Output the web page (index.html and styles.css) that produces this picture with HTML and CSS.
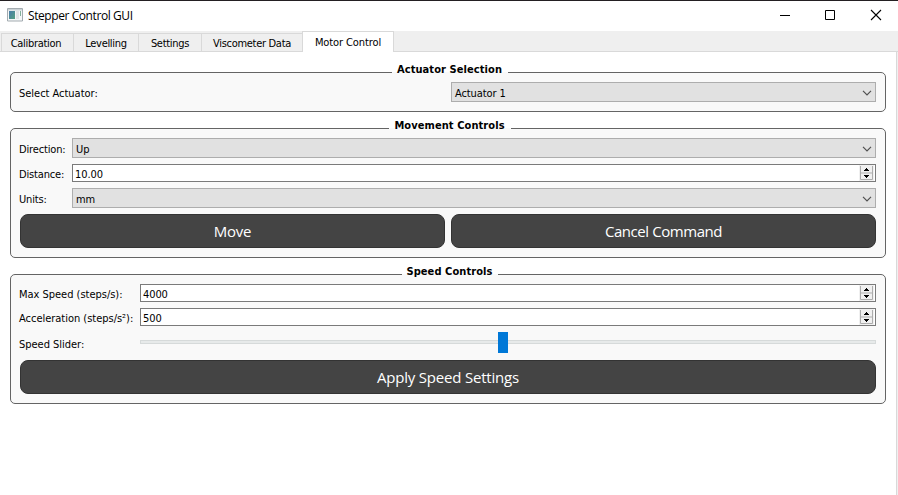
FILE: index.html
```html
<!DOCTYPE html>
<html lang="en">
<head>
<meta charset="utf-8">
<title>Stepper Control GUI</title>
<link rel="stylesheet" href="styles.css">
</head>
<body>
<svg class="defs" aria-hidden="true">
  <symbol id="chevron" viewBox="0 0 10 6"><path d="M1 .8 5 4.8 9 .8" fill="none" stroke="#505050" stroke-width="1.2"/></symbol>
  <symbol id="spin" viewBox="0 0 15 16">
    <path d="M0 0h15v16H0z" fill="#f0f0f0"/>
    <path d="M1.5 1v13.500h12V1M1.500 8h12" fill="none" stroke="#adadad"/>
    <path d="M7 3h1v1h1v1h1v1H5V5h1V4h1zM5 10h5v1H9v1H8v1H7v-1H6v-1H5z" fill="#000"/>
  </symbol>
</svg>
<header class="titlebar">
  <svg class="app-icon" width="16" height="14" viewBox="0 0 16 14">
    <defs><linearGradient id="pane" x2="1" y2="1"><stop stop-color="#4a7dab"/><stop offset="1" stop-color="#55a080"/></linearGradient></defs>
    <path d="M.5.5h15v12.500H.5z" fill="#f5f7f8" stroke="#a3abb0"/>
    <path d="M1 1h14v1.500H1z" fill="#cbd2d6"/>
    <path d="M2 3h6v8H2z" fill="url(#pane)"/>
    <path d="M9 3h3v8H9z" fill="#e1e4e6"/><path d="M13 3h1v5h-1z" fill="#82b19b"/>
  </svg>
  <h1>Stepper Control GUI</h1>
  <svg class="window-buttons" width="102" height="12" viewBox="0 0 102 12">
    <path d="M1 5.500h10M46.500 .5h9v9h-9z" fill="none" stroke="#000"/>
    <path d="M92 0l10 10M102 0 92 10" fill="none" stroke="#000" stroke-width="1.100"/>
  </svg>
</header>
<nav class="tabs">
  <a class="tab calibration">Calibration</a>
  <a class="tab levelling">Levelling</a>
  <a class="tab settings">Settings</a>
  <a class="tab viscometer">Viscometer Data</a>
  <a class="tab motor active">Motor Control</a>
</nav>
<main class="pane">
  <section class="group actuator">
    <h2><span>Actuator Selection</span></h2>
    <div class="row halves"><label>Select Actuator:</label><div class="combo">Actuator 1<svg><use href="#chevron"/></svg></div></div>
  </section>
  <section class="group movement">
    <h2><span>Movement Controls</span></h2>
    <div class="row"><label>Direction:</label><div class="combo">Up<svg><use href="#chevron"/></svg></div></div>
    <div class="row"><label>Distance:</label><div class="spinbox">10.00<svg><use href="#spin"/></svg></div></div>
    <div class="row"><label>Units:</label><div class="combo">mm<svg><use href="#chevron"/></svg></div></div>
    <div class="buttons"><button>Move</button><button class="cancel">Cancel Command</button></div>
  </section>
  <section class="group speed">
    <h2><span>Speed Controls</span></h2>
    <div class="row"><label>Max Speed (steps/s):</label><div class="spinbox">4000<svg><use href="#spin"/></svg></div></div>
    <div class="row"><label>Acceleration (steps/s²):</label><div class="spinbox">500<svg><use href="#spin"/></svg></div></div>
    <div class="row slider-row"><label>Speed Slider:</label><div class="slider"><i></i></div></div>
    <div class="buttons"><button>Apply Speed Settings</button></div>
  </section>
</main>
</body>
</html>
```
FILE: styles.css
```css
* { box-sizing: border-box; }
body {
  margin: 0;
  width: 898px;
  height: 495px;
  overflow: hidden;
  display: flex;
  flex-direction: column;
  background: #f0f0f0;
  color: #000;
  font: 11px/14px "DejaVu Sans Condensed", "DejaVu Sans", sans-serif;
  font-stretch: condensed;
  letter-spacing: -0.3px;
  white-space: nowrap;
}
.defs { position: absolute; width: 0; height: 0; }

.titlebar {
  height: 31px;
  flex: none;
  display: flex;
  align-items: center;
  background: #fff;
  border-top: 1px solid #231f22;
  padding: 0 16px 0 7px;
}
.app-icon { margin-top: -2px; }
.titlebar h1 { margin: 0 auto 0 5px; font: 12px/16px "Open Sans", sans-serif; letter-spacing: -0.42px; }
.window-buttons { margin-right: 1px; overflow: visible; }

.tabs {
  height: 21px;
  flex: none;
  display: flex;
  align-items: flex-end;
  padding-left: 1px;
  background: #efefef;
  box-shadow: inset 0 -1px #d9d9d9;
}
.tab {
  height: 19px;
  border: solid #d9d9d9;
  border-width: 1px 0 1px 1px;
  padding-top: 3px;
  text-align: center;
}
.tab.calibration { width: 72px; padding-right: 3px; }
.tab.levelling { width: 65px; }
.tab.settings { width: 63px; }
.tab.viscometer { width: 101px; }
.tab.active {
  width: 92px;
  height: 21px;
  padding-top: 4px;
  background: #fff;
  border-width: 1px 1px 0;
  letter-spacing: -0.1px;
}

.pane {
  width: 897px;
  flex: 1;
  background: #fff;
  border-right: 1px solid #d9d9d9;
  padding: 20px 10px 0;
  display: flex;
  flex-direction: column;
  gap: 16px;
}
.group {
  border: 1px solid #646464;
  border-radius: 5px;
  background: #f9f9f9;
  padding: 0 9px 9px;
  display: flex;
  flex-direction: column;
  gap: 6px;
}
.group h2 {
  height: 9px;
  margin: 0 -4px -6px 0;
  display: flex;
  justify-content: center;
  font-size: 11px;
  line-height: 14px;
  letter-spacing: 0.08px;
}
.group h2 span {
  height: 11px;
  margin-top: -10px;
  padding-right: 1px;
  text-align: center;
  background: linear-gradient(#fff 9px, #f9f9f9 9px);
}
.actuator h2 span { width: 116px; }
.movement h2 span { width: 122px; }
.speed h2 span { width: 96px; }

.row { display: grid; grid-template-columns: 46px 1fr; column-gap: 6px; align-items: center; }
.row.halves { grid-template-columns: 1fr 1fr; }
.speed .row { grid-template-columns: 114px 1fr; }
.row label { padding: 3px 0 0; margin: -1px 0 -2px -1px; letter-spacing: -0.16px; }
.speed .row label, .halves label { letter-spacing: -0.02px; }

.combo, .spinbox {
  display: flex;
  align-items: center;
  justify-content: space-between;
  height: 20px;
  border: 1px solid #adadad;
  background: #e1e1e1;
  padding: 3px 3px 0 3px;
  letter-spacing: -0.1px;
}
.combo svg { width: 10px; height: 6px; margin-top: -1px; }
.spinbox { height: 18px; border-color: #7a7a7a; background: #fff; padding: 3px 1px 0 2px; letter-spacing: -0.1px; }
.spinbox svg { width: 15px; height: 16px; margin-top: -3px; }

.buttons { display: flex; gap: 6px; }
button {
  flex: 1 1 0;
  height: 34px;
  padding: 0;
  border: 1px solid #333;
  border-radius: 8px;
  background: #444;
  color: #fff;
  font: 15px/20px "Open Sans", sans-serif;
  letter-spacing: -0.2px;
}
button.cancel { letter-spacing: -0.43px; }

.slider-row { height: 22px; }
.slider {
  position: relative;
  height: 4px;
  margin-top: -2px;
  background: #e7eaea;
  border: 1px solid #d6dada;
}
.slider i { position: absolute; left: 357px; top: -9px; width: 10px; height: 21px; background: #0078d7; }
```
